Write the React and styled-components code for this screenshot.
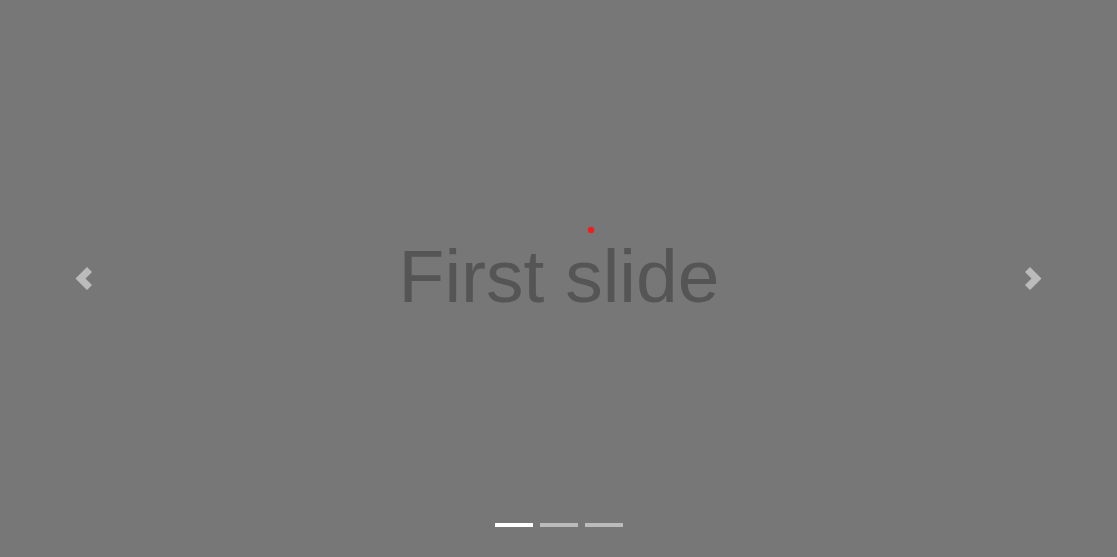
import React from 'react';
import styled, { createGlobalStyle } from 'styled-components';

const GlobalStyle = createGlobalStyle`
    html, body {
        margin: 0;
        padding: 0;
        height: 100%;
        overflow: hidden;
    }
    #root {
        height: 100%;
    }
`

const Carousel = styled.div`
    position: relative;
    width: 100%;
    height: 557px;
    background: #777;
    overflow: hidden;
`

const Slide = styled.div`
    display: flex;
    align-items: center;
    justify-content: center;
    height: 100%;
`

const SlideText = styled.span`
    font-family: "Liberation Sans", Arial, sans-serif;
    font-size: 75px;
    line-height: 1;
    color: #555;
    margin-top: -4px;
    margin-left: 1px;
`

const Control = styled.button`
    position: absolute;
    top: 0;
    bottom: 0;
    ${({side}) => side}: 0;
    width: 15%;
    display: flex;
    align-items: center;
    justify-content: center;
    padding: 0;
    border: 0;
    background: none;
    opacity: 0.5;
    cursor: pointer;
`

const Indicators = styled.ol`
    position: absolute;
    left: 0;
    right: 0;
    bottom: 30px;
    display: flex;
    justify-content: center;
    gap: 7px;
    margin: 0;
    padding: 0;
    list-style: none;
`

const Indicator = styled.li`
    width: 38px;
    height: 4px;
    background: #fff;
    opacity: ${({active}) => active ? 1 : 0.5};
`

const Dot = styled.span`
    position: absolute;
    left: 588px;
    top: 227px;
    width: 6px;
    height: 6px;
    border-radius: 50%;
    background: #f21d1d;
    box-shadow: 0 0 1px #f21d1d;
`

const Chevron = ({dir}) => (
    <svg width="18" height="25" viewBox="0 0 18 25" fill="#fff"
        style={dir === 'next' ? {transform: 'scaleX(-1)'} : undefined}>
        <polygon points="0.5,12.5 12,1 17,6 10.5,12.5 17,19 12,24"/>
    </svg>
)

const App = () => {
    return (
        <>
            <GlobalStyle/>
            <Carousel>
                <Slide>
                    <SlideText>First slide</SlideText>
                </Slide>
                <Control side="left" aria-label="Previous"><Chevron dir="prev"/></Control>
                <Control side="right" aria-label="Next"><Chevron dir="next"/></Control>
                <Indicators>
                    <Indicator active/>
                    <Indicator/>
                    <Indicator/>
                </Indicators>
                <Dot/>
            </Carousel>
        </>
    )
}

export default App;
